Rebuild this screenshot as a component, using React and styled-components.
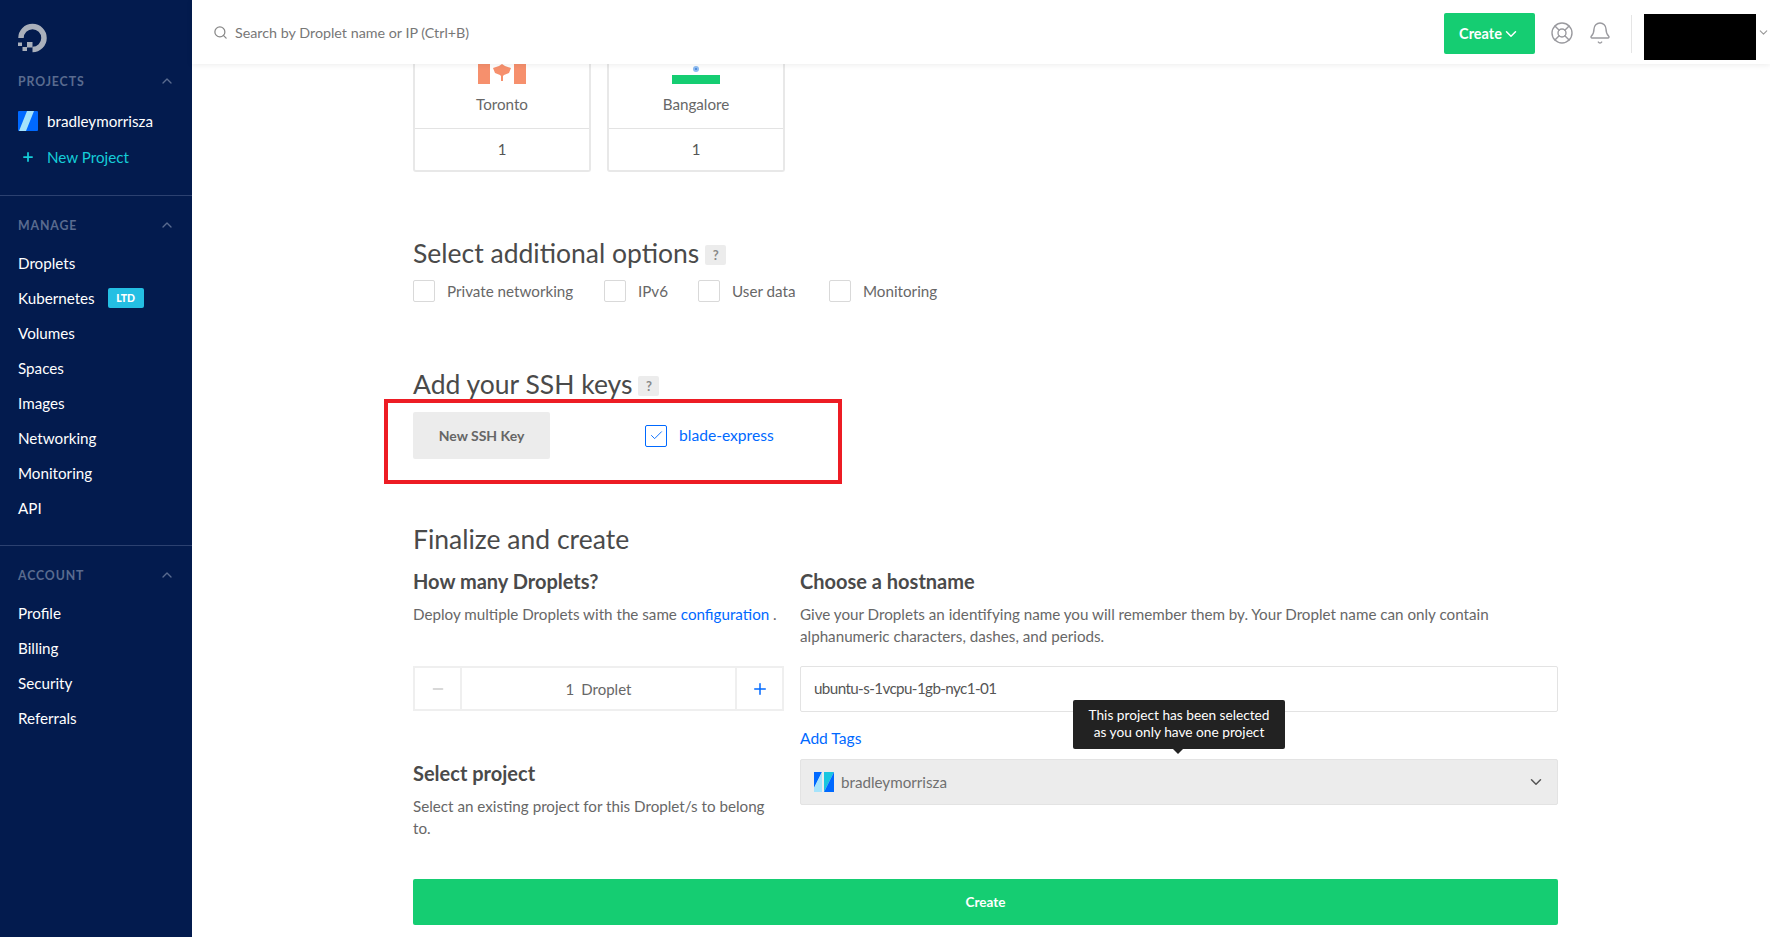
import React from "react";
import styled, { createGlobalStyle } from "styled-components";
import { ChevronDown, ChevronUp, Plus, Minus, Search, LifeBuoy, Bell, Check } from "lucide-react";

const GlobalStyle = createGlobalStyle`
	* {
		box-sizing: border-box;
	}
	html, body {
		margin: 0;
		height: 100%;
		overflow: hidden;
		background: #fff;
		font-family: Lato, "Open Sans", sans-serif;
	}
`;

const Page = styled.div`
	display: flex;
	width: 1770px;
	height: 937px;
	overflow: hidden;
`;

const Sidebar = styled.aside`
	display: flex;
	flex-direction: column;
	flex: 0 0 192px;
	background-color: #031b4e;
	color: #fff;
`;

const LogoWrap = styled.div`
	height: 65px;
	padding: 21px 0 0 16px;
`;

const NavGroup = styled.section`
	padding: 0 17px 0 18px;
	height: ${(props) => props.height}px;
	border-bottom: ${(props) => (props.last ? "none" : "1px solid #2c4170")};
`;

const NavTitle = styled.div`
	display: flex;
	justify-content: space-between;
	align-items: center;
	height: 32px;
	margin-top: ${(props) => props.top || 0}px;
	margin-bottom: ${(props) => props.gap || 6}px;
	font-size: 12.3px;
	font-weight: 700;
	letter-spacing: 0.9px;
	color: #5a6b8f;
`;

const NavItem = styled.div`
	display: flex;
	align-items: center;
	gap: ${(props) => props.gap || 9}px;
	height: 34.9px;
	padding-top: ${(props) => props.shift || 0}px;
	font-size: 15.2px;
	color: ${(props) => props.color || "#fff"};
`;

const LtdBadge = styled.span`
	width: 36px;
	height: 20px;
	margin-left: 2px;
	line-height: 20px;
	border-radius: 2px;
	background-color: #24bfe3;
	color: #fff;
	font-size: 10.5px;
	font-weight: 900;
	text-align: center;
`;

const PlusSlot = styled.span`
	display: flex;
	justify-content: center;
	width: 20px;
`;

const Column = styled.div`
	display: flex;
	flex-direction: column;
	flex: 1;
	min-width: 0;
`;

const Header = styled.header`
	position: relative;
	z-index: 2;
	display: flex;
	align-items: center;
	flex: 0 0 64px;
	padding-left: 21px;
	background: #fff;
	box-shadow: 0 1px 6px rgba(0, 0, 0, 0.08);
`;

const SearchText = styled.div`
	display: flex;
	align-items: center;
	flex: 1;
	gap: 7px;
	font-size: 14.3px;
	color: #777;
`;

const CreateSmall = styled.button`
	display: flex;
	justify-content: center;
	align-items: center;
	width: 91px;
	height: 41px;
	margin-top: 3px;
	border: 0;
	border-radius: 2px;
	background-color: #15cd72;
	color: #fff;
	font: 700 14.5px Lato, sans-serif;
`;

const HeaderIcons = styled.div`
	display: flex;
	align-items: center;
	gap: 14px;
	margin: 2px 0 0 15px;
	color: #9a9a9f;
`;

const HeaderRule = styled.div`
	width: 1px;
	height: 38px;
	margin: 4px 12px 0 19px;
	background-color: #e5e5e5;
`;

const Account = styled.div`
	width: 112px;
	height: 46px;
	margin-top: 10px;
	background: #000;
`;

const AccountCaret = styled.div`
	display: flex;
	margin-left: 1px;
	color: #999;
`;

const Main = styled.main`
	flex: 1;
	padding: 0 212px 0 221px;
	color: #676767;
`;

const Cards = styled.div`
	display: flex;
	gap: 16px;
`;

const Card = styled.div`
	display: flex;
	flex-direction: column;
	width: 178px;
	height: 108px;
	border: 2px solid #e8e8e8;
	border-top: 0;
	border-radius: 0 0 3px 3px;
	text-align: center;
`;

const CardTop = styled.div`
	flex: 0 0 65px;
	border-bottom: 1px solid #e3e3e3;
	font-size: 15.2px;
`;

const FlagWrap = styled.div`
	display: flex;
	justify-content: center;
	height: 20px;
	margin-bottom: 11px;
`;

const CardCount = styled.div`
	line-height: 40px;
	font-size: 15px;
	color: #555;
`;

const SectionTitle = styled.h2`
	display: flex;
	align-items: center;
	gap: 6px;
	margin: ${(props) => props.top}px 0 0;
	height: 36px;
	font-size: 26.5px;
	font-weight: 400;
	color: #4a4a4a;
`;

const Help = styled.span`
	width: 21px;
	height: 20px;
	margin-top: 3px;
	border-radius: 2px;
	background-color: #ececec;
	color: #888;
	font-size: 13px;
	font-weight: 700;
	line-height: 20px;
	text-align: center;
`;

const Options = styled.div`
	display: flex;
	align-items: center;
	margin-top: 8px;
	height: 24px;
`;

const Option = styled.label`
	display: flex;
	align-items: center;
	gap: 12px;
	width: ${(props) => props.width}px;
	font-size: 15.2px;
	color: #676767;
`;

const Box = styled.span`
	display: flex;
	justify-content: center;
	align-items: center;
	flex: 0 0 22px;
	height: 22px;
	border: 1px solid ${(props) => (props.checked ? "#0069ff" : "#d9d9d9")};
	border-radius: 2px;
	color: #0069ff;
`;

const SshRow = styled.div`
	position: relative;
	display: flex;
	align-items: center;
	margin-top: 10px;
	height: 47px;
`;

const Annotation = styled.div`
	position: absolute;
	left: -29px;
	top: -13px;
	width: 458px;
	height: 85px;
	border: 4.5px solid #ed1c24;
`;

const GreyButton = styled.button`
	width: 137px;
	height: 47px;
	margin-right: 95px;
	border: 0;
	border-radius: 2px;
	background-color: #ececec;
	color: #666;
	font: 700 14px Lato, sans-serif;
`;

const KeyLabel = styled.span`
	margin: 0 0 2px 12px;
	font-size: 15.6px;
	color: #0069ff;
`;

const Finalize = styled.div`
	display: grid;
	grid-template-columns: 371px 758px;
	column-gap: 16px;
	margin-top: 11px;
`;

const FormColumn = styled.div`
	position: relative;
	display: flex;
	flex-direction: column;
`;

const SubTitle = styled.h3`
	margin: ${(props) => props.top || 0}px 0 0;
	height: 26px;
	line-height: 26px;
	font-size: 20px;
	font-weight: 700;
	color: #4a4a4a;
`;

const Copy = styled.p`
	margin: 9px 0 0;
	font-size: 15.2px;
	line-height: 22px;
	height: 44px;
	color: #676767;
`;

const Link = styled.a`
	color: #0069ff;
`;

const Stepper = styled.div`
	display: grid;
	grid-template-columns: 45px 1fr 45px;
	height: 45px;
	margin-top: 19px;
	border: 2px solid #efefef;
	font-size: 15px;
`;

const StepCell = styled.div`
	display: flex;
	justify-content: center;
	align-items: center;
	gap: 7px;
	border-left: ${(props) => (props.center ? "2px solid #efefef" : "none")};
	border-right: ${(props) => (props.center ? "2px solid #efefef" : "none")};
`;

const HostInput = styled.div`
	display: flex;
	align-items: center;
	height: 46px;
	margin-top: 19px;
	padding: 0 13px 2px;
	border: 1px solid #e3e3e3;
	border-radius: 2px;
	font-size: 15.2px;
	letter-spacing: -0.6px;
	color: #555;
`;

const TagLink = styled(Link)`
	height: 22px;
	margin-top: 15px;
	font-size: 15.6px;
	line-height: 22px;
`;

const ProjectSelect = styled.div`
	display: flex;
	align-items: center;
	gap: 7px;
	height: 46px;
	margin-top: 10px;
	padding: 0 12px 0 13px;
	border: 1px solid #e3e3e3;
	border-radius: 2px;
	background-color: #ececec;
	font-size: 15.2px;
	color: #707070;
`;

const SelectName = styled.span`
	flex: 1;
`;

const Tooltip = styled.div`
	position: absolute;
	left: 273px;
	top: 132px;
	width: 212px;
	height: 49px;
	padding-top: 6px;
	border-radius: 2px;
	background-color: #222;
	color: #fff;
	font-size: 13.7px;
	line-height: 17px;
	text-align: center;

	&::after {
		content: "";
		position: absolute;
		left: 100px;
		bottom: -5px;
		border-left: 5px solid transparent;
		border-right: 5px solid transparent;
		border-top: 5px solid #222;
	}
`;

const CreateButton = styled.button`
	display: block;
	width: 100%;
	height: 46px;
	margin-top: 40px;
	border: 0;
	border-radius: 2px;
	background-color: #15cd72;
	color: #fff;
	font: 700 13.5px Lato, sans-serif;
`;

const DoLogo = () => (
	<svg width="32" height="32" viewBox="0 0 32 32">
		<path d="M5 17A11.5 11.5 0 1 1 16.5 28.5" fill="none" stroke="#aab0bb" strokeWidth="5.5" />
		<path d="M11 21h5.5v5.500H11zM6.500 26H11v4H6.500zM2 21.500h4V25H2z" fill="#aab0bb" />
	</svg>
);

const ProjectIcon = ({ variant }) => (
	<svg width="20" height="20" viewBox="0 0 20 20">
		{variant === "select" ? (
			<>
				<path d="M0 0H8L0 16Z" fill="#0069ff" />
				<path d="M0 16L8 0V20H0Z" fill="#a5e3fb" />
				<path d="M10 0H20L10 20Z" fill="#18c6e0" />
				<path d="M20 0V20H10Z" fill="#0069ff" />
			</>
		) : (
			<>
				<rect width="20" height="20" rx="1" fill="#0069ff" />
				<path d="M1 20L9 0H16L8 20Z" fill="#a5e3fb" />
			</>
		)}
	</svg>
);

const CanadaFlag = () => (
	<svg width="48" height="20" viewBox="0 0 48 20">
		<path d="M0 0h12v20H0zM36 0h12v20H36z" fill="#f6906d" />
		<path d="M15 4l6-2 3-2 3 2 6 2-2 5-5 2-1 1v5h-2v-5l-1-1-5-2z" fill="#f6906d" />
	</svg>
);

const IndiaFlag = () => (
	<svg width="48" height="20" viewBox="0 0 48 20">
		<circle cx="24" cy="5" r="3" fill="#8fbdf2" />
		<circle cx="24" cy="5" r="1" fill="#3d7fd8" />
		<rect y="11" width="48" height="9" fill="#15cd72" />
	</svg>
);

const manage = ["Droplets", "Kubernetes", "Volumes", "Spaces", "Images", "Networking", "Monitoring", "API"];
const account = ["Profile", "Billing", "Security", "Referrals"];
const options = [
	{ label: "Private networking", width: 191 },
	{ label: "IPv6", width: 94 },
	{ label: "User data", width: 131 },
	{ label: "Monitoring", width: 120 },
];

export default function App() {
	return (
		<>
			<GlobalStyle />
			<Page>
				<Sidebar>
					<LogoWrap>
						<DoLogo />
					</LogoWrap>
					<NavGroup height={131}>
						<NavTitle gap={7}>
							PROJECTS
							<ChevronUp size={16} color="#5a6b8f" />
						</NavTitle>
						<NavItem>
							<ProjectIcon />
							bradleymorrisza
						</NavItem>
						<NavItem color="#15cdd8" shift={2}>
							<PlusSlot>
								<Plus size={14} strokeWidth={3} />
							</PlusSlot>
							New Project
						</NavItem>
					</NavGroup>
					<NavGroup height={350}>
						<NavTitle top={13} gap={5}>
							MANAGE
							<ChevronUp size={16} color="#5a6b8f" />
						</NavTitle>
						{manage.map((item) => (
							<NavItem key={item} gap={11}>
								{item}
								{item === "Kubernetes" && <LtdBadge>LTD</LtdBadge>}
							</NavItem>
						))}
					</NavGroup>
					<NavGroup last height={200}>
						<NavTitle top={13} gap={5}>
							ACCOUNT
							<ChevronUp size={16} color="#5a6b8f" />
						</NavTitle>
						{account.map((item) => (
							<NavItem key={item}>{item}</NavItem>
						))}
					</NavGroup>
				</Sidebar>
				<Column>
					<Header>
						<SearchText>
							<Search size={15} color="#888" />
							Search by Droplet name or IP (Ctrl+B)
						</SearchText>
						<CreateSmall>
							Create
							<ChevronDown size={18} />
						</CreateSmall>
						<HeaderIcons>
							<LifeBuoy size={24} strokeWidth={1.4} />
							<Bell size={24} strokeWidth={1.4} />
						</HeaderIcons>
						<HeaderRule />
						<Account />
						<AccountCaret>
							<ChevronDown size={13} />
						</AccountCaret>
					</Header>
					<Main>
						<Cards>
							<Card>
								<CardTop>
									<FlagWrap>
										<CanadaFlag />
									</FlagWrap>
									Toronto
								</CardTop>
								<CardCount>1</CardCount>
							</Card>
							<Card>
								<CardTop>
									<FlagWrap>
										<IndiaFlag />
									</FlagWrap>
									Bangalore
								</CardTop>
								<CardCount>1</CardCount>
							</Card>
						</Cards>
						<SectionTitle top={63}>
							Select additional options
							<Help>?</Help>
						</SectionTitle>
						<Options>
							{options.map((option) => (
								<Option key={option.label} width={option.width}>
									<Box />
									{option.label}
								</Option>
							))}
						</Options>
						<SectionTitle top={63}>
							Add your SSH keys
							<Help>?</Help>
						</SectionTitle>
						<SshRow>
							<Annotation />
							<GreyButton>New SSH Key</GreyButton>
							<Box checked>
								<Check size={15} strokeWidth={1.5} />
							</Box>
							<KeyLabel>blade-express</KeyLabel>
						</SshRow>
						<SectionTitle top={62}>Finalize and create</SectionTitle>
						<Finalize>
							<FormColumn>
								<SubTitle>How many Droplets?</SubTitle>
								<Copy>
									Deploy multiple Droplets with the same <Link>configuration</Link> .
								</Copy>
								<Stepper>
									<StepCell>
										<Minus size={16} color="#ccc" />
									</StepCell>
									<StepCell center>
										<span>1</span> Droplet
									</StepCell>
									<StepCell>
										<Plus size={18} color="#0069ff" />
									</StepCell>
								</Stepper>
								<SubTitle top={49}>Select project</SubTitle>
								<Copy>Select an existing project for this Droplet/s to belong to.</Copy>
							</FormColumn>
							<FormColumn>
								<SubTitle>Choose a hostname</SubTitle>
								<Copy>
									Give your Droplets an identifying name you will remember them by. Your Droplet name can only contain
									alphanumeric characters, dashes, and periods.
								</Copy>
								<HostInput>ubuntu-s-1vcpu-1gb-nyc1-01</HostInput>
								<TagLink>Add Tags</TagLink>
								<ProjectSelect>
									<ProjectIcon variant="select" />
									<SelectName>bradleymorrisza</SelectName>
									<ChevronDown size={18} color="#555" />
								</ProjectSelect>
								<Tooltip>
									This project has been selected
									<br />
									as you only have one project
								</Tooltip>
							</FormColumn>
						</Finalize>
						<CreateButton>Create</CreateButton>
					</Main>
				</Column>
			</Page>
		</>
	);
}
